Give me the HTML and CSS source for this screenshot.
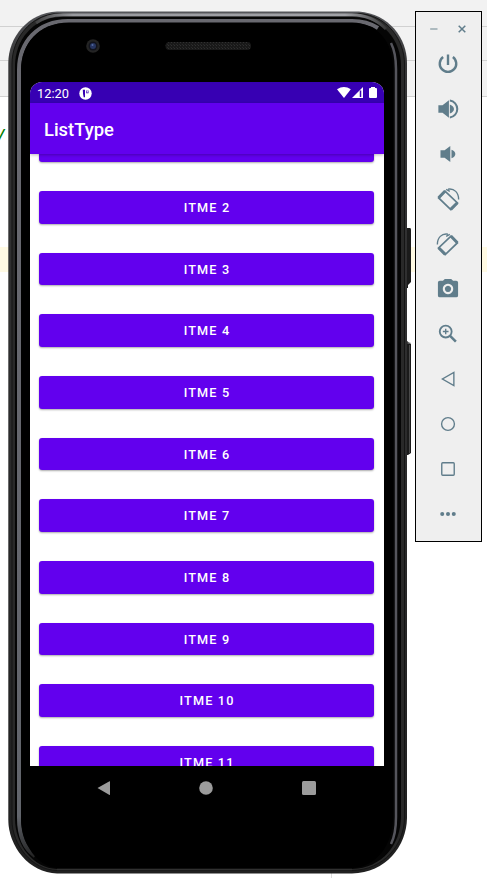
FILE: index.html
```
<!DOCTYPE html>
<html lang="en">
<head>
<meta charset="utf-8">
<title>ListType</title>
<link rel="stylesheet" href="styles.css">
</head>
<body>
<div class="editor">
  <div class="strip strip-a"></div><div class="strip strip-b"></div><div class="strip strip-c"></div>
  <div class="code">/</div>
  <div class="caret-row"></div>
  <div class="guide"></div>
</div>
<main class="desktop">
  <section class="phone">
    <svg class="frame" width="407" height="866" viewBox="8 10 407 866">
      <defs>
        <linearGradient id="rim" x1="0" y1="0" x2="0" y2="1">
          <stop offset="0" stop-color="#55565a"/><stop offset=".06" stop-color="#353536"/><stop offset="1" stop-color="#202020"/>
        </linearGradient>
        <linearGradient id="shine" gradientUnits="userSpaceOnUse" x1="0" y1="20" x2="0" y2="858">
          <stop offset="0" stop-color="#696970"/><stop offset=".95" stop-color="#62656c"/><stop offset="1" stop-color="#222"/>
        </linearGradient>
        <linearGradient id="top" gradientUnits="userSpaceOnUse" x1="30" y1="0" x2="388" y2="0">
          <stop offset="0" stop-color="#333"/><stop offset=".12" stop-color="#999a9f"/><stop offset=".88" stop-color="#a2a3a8"/><stop offset="1" stop-color="#333"/>
        </linearGradient>
        <pattern id="mesh" width="3" height="3" patternUnits="userSpaceOnUse"><rect width="3" height="3" fill="#191919"/><rect width="1" height="1" fill="#303030"/><rect x="2" y="2" width="1" height="1" fill="#282828"/></pattern>
      </defs>
      <path d="M406 228h4q1 0 1 2v52l-3 3v3h-2z" fill="#1b1b1b"/>
      <path d="M406 341h1l4 3v109l-3 2h-2z" fill="#1b1b1b"/><path d="M409.500 345v108" stroke="#4a4a4a"/><path d="M407.500 343h3" stroke="#999"/>
      <path d="M57 11.500H359C389 14 407 38 407 63V818C406.500 846 386 873 352 873.500H57C29 873 8.300 846 8.300 820V63C8.300 37 28 13 57 11.500Z" fill="url(#rim)"/>
      <path d="M57 13.500H359C387 15 404.500 40 404.500 64V818C404 845 384 870 352 870.500H57C32 870 12 845 12 820V64C12 38 31 15 57 13.500Z" fill="#292929" stroke="#141414"/>
      <path d="M60 17H354C384 18 401 41 401 66V816C401 845 382 868 352 869H57C33 868 15 845 15 818V66C15 40 33 18 60 17Z" fill="#050505"/>
      <path d="M36 23Q47 15 63 14.800H352Q372 15 386 29" fill="none" stroke="url(#top)" stroke-width="3"/>
      <path d="M57 869.500H352" stroke="#303030" stroke-width="1.500"/>
      <path d="M378 28Q367 21 352 21H68C38 21 19 42 19 70V818Q19 845 35 856" fill="none" stroke="url(#shine)" stroke-width="4"/>
      <path d="M391 43Q396 53 396 69V817Q396 834 391 844" fill="none" stroke="#55555c" stroke-width="2.500"/>
      <path d="M352 22.500H69C39 23 21 43 21 71V818C21 844 38 867 57 868H352C377 867 393 844 393 817V69C393 42 378 23 352 22.500Z" fill="#000"/>
      <circle cx="93" cy="46" r="6.800" fill="#242424"/><circle cx="93" cy="46" r="4.500" fill="#11131c"/><circle cx="93" cy="46" r="3" fill="#26345f"/><circle cx="92.500" cy="45" r="1" fill="#5269a0"/>
      <rect x="165.500" y="42" width="85.500" height="8" rx="4" fill="url(#mesh)"/>
    </svg>
    <div class="screen">
      <div class="status">
        <span>12:20</span>
        <svg class="badge" width="13" height="13" viewBox="0 0 13 13"><circle cx="6.500" cy="6.500" r="6.200" fill="#fff"/><path d="M3.800 2.800H6v7.400H4.700Q3.800 7 3.800 2.800ZM7.200 3.600h2.300v2.600H7.200z" fill="#3700b3"/><path d="M7.800 3.600h1v1.800h-1z" fill="#fff"/></svg>
        <svg class="signals" width="42" height="12" viewBox="337 87 42 12"><path d="M337 89.300Q344 84.700 350.800 89.300L344 98Z" fill="#fff"/><path d="M352 98L363 87V98Z" fill="#fff"/><path d="M360.500 90.500V97" stroke="#3700b3" stroke-width="1.500"/><path d="M371 87h4v1h1q1 0 1 1v8q0 1-1 1h-6q-1 0-1-1v-8q0-1 1-1h1z" fill="#fff"/></svg>
      </div>
      <header class="appbar">ListType</header>
      <div class="list">
        <div class="button">ITME 1</div><div class="button">ITME 2</div><div class="button">ITME 3</div><div class="button">ITME 4</div><div class="button">ITME 5</div><div class="button">ITME 6</div><div class="button">ITME 7</div><div class="button">ITME 8</div><div class="button">ITME 9</div><div class="button">ITME 10</div><div class="button">ITME 11</div>
      </div>
    </div>
    <nav class="nav">
      <svg width="16" height="16" viewBox="0 0 16 16"><path d="M1.500 8L13.500 1.200q.5-.2.500.4v13q0 .600-.5.300Z"/></svg>
      <svg width="16" height="16" viewBox="0 0 16 16"><circle cx="8" cy="8" r="6.800"/></svg>
      <svg width="16" height="16" viewBox="0 0 16 16"><rect x="1" y="1" width="14" height="14" rx="1.500"/></svg>
    </nav>
  </section>
  <aside class="tools">
    <div class="window">
      <svg width="8" height="10" viewBox="0 0 8 10"><path d="M.2 5h7.300" stroke="#a1b0b6" stroke-width="1.700"/></svg>
      <svg width="8" height="10" viewBox="0 0 8 10"><path d="M.7 1.700l6.600 6.600m0-6.600L.7 8.300" stroke="#607d8b" stroke-width="1.500"/></svg>
    </div>
    <svg class="tool" viewBox="0 0 24 24"><path class="line" stroke-width="2.600" d="M12 1.500v11.500M6.700 4.300a9 9 0 1 0 10.600 0"/></svg>
    <svg class="tool" viewBox="0 0 24 24"><path d="M1.500 8h4.500L13 2.500v19L6 16h-4.500zM14 7q4.500 1.800 4.500 5t-4.500 5z"/><path class="line" stroke-width="2.200" d="M14 2.600a9.500 9.500 0 0 1 0 18.800"/></svg>
    <svg class="tool" viewBox="0 0 24 24"><path d="M3.800 8h4.500L14.500 3.200v17.600L8.300 16h-4.500zM15.800 7.300q4.200 1.700 4.200 4.700t-4.200 4.700z"/></svg>
    <svg class="tool" viewBox="0 0 24 24"><path class="line" stroke-width="1.900" d="M1.800 10.800L8.800 3.500L22.300 16.300L15 23.500Z"/><path class="line" stroke-width="3.300" d="M1.800 10.600L8.900 3.300M15 23.300l7.200-7.200"/><path class="line" stroke-width="1.500" d="M10 1.500l4 2.200M12 1.300C19 .2 23.600 5 23.600 12.500"/></svg>
    <svg class="tool" viewBox="0 0 24 24"><path class="line" stroke-width="1.900" d="M22.200 10.800L15.200 3.500L1.700 16.300L9 23.500Z"/><path class="line" stroke-width="3.300" d="M22.200 10.600L15.100 3.300M9 23.300l-7.200-7.200"/><path class="line" stroke-width="1.500" d="M14 1.500l-4 2.200M12 1.300C5 .2 .4 5 .4 12.500"/></svg>
    <svg class="tool" viewBox="0 0 24 24"><path fill-rule="evenodd" d="M8.500 1h7l2 2H21q2 0 2 2v14q0 2-2 2H3q-2 0-2-2V5q0-2 2-2h3.500zM12 6.200a5.700 5.700 0 1 0 .01 0zM12 8.500a3.400 3.400 0 1 1-.01 0z"/></svg>
    <svg class="tool" viewBox="0 0 24 24"><circle class="line" stroke-width="2" cx="9.500" cy="9.300" r="6.500"/><path class="line" stroke-width="2.800" d="M14 13.800l6.600 6.600"/><path class="line" stroke-width="1.500" d="M6.400 9.300h6.200M9.500 6.200v6.200"/></svg>
    <svg class="tool" viewBox="0 0 24 24"><path class="line" stroke-width="1.500" d="M18.400 4.800v14.400L5.900 12z"/></svg>
    <svg class="tool" viewBox="0 0 24 24"><circle class="line" stroke-width="1.500" cx="12" cy="12" r="7"/></svg>
    <svg class="tool" viewBox="0 0 24 24"><rect class="line" stroke-width="1.500" x="5.200" y="5.200" width="13.600" height="13.600" rx="1"/></svg>
    <svg class="tool" viewBox="0 0 24 24"><circle cx="5.700" cy="12" r="2.200"/><circle cx="12" cy="12" r="2.200"/><circle cx="18.300" cy="12" r="2.200"/></svg>
  </aside>
</main>
</body>
</html>
```
FILE: styles.css
```
* { box-sizing: border-box; }
body { margin: 0; width: 487px; height: 878px; overflow: hidden; background: #fff; font-family: Roboto, sans-serif; }
svg { display: block; flex: none; }
.editor { position: absolute; inset: 0; }
.strip { background: #f2f2f2; border-bottom: 1px solid #d1d1d1; }
.strip-a { height: 27px; }
.strip-b { height: 34px; }
.strip-c { height: 36px; }
.code { height: 150px; padding-top: 25px; margin-left: -4px; color: #008000; font: italic 18px/28px "DejaVu Sans Mono", monospace; }
.caret-row { height: 25px; background: #fffae3; }
.guide { width: 1px; height: 606px; margin-left: 331px; background: #ddd; }
.desktop { position: relative; display: flex; align-items: flex-start; height: 878px; padding-left: 8px; }
.phone { position: relative; width: 407px; height: 878px; padding: 82px 31px 0 22px; }
.frame { position: absolute; left: 0; top: 10px; }
.screen { position: relative; width: 354px; height: 684px; overflow: hidden; border-radius: 12px 12px 0 0; background: #fff; }
.status { display: flex; align-items: center; height: 21px; padding: 1px 5px 0 7px; background: #3700b3; color: #fff; font-size: 12.800px; }
.badge { margin-left: 10px; }
.signals { margin-left: auto; }
.appbar { position: relative; z-index: 1; height: 50.500px; padding-left: 14px; background: #6200ee; box-shadow: 0 1px 3px #0004; color: #fff; font-size: 18.400px; font-weight: 500; line-height: 54px; }
.list { display: flex; flex-direction: column; gap: 29.070px; margin-top: -24px; padding: 0 10px 0 9px; }
.button { flex: none; height: 32.600px; padding-left: 1px; border-radius: 3px; background: #6200ee; box-shadow: 0 1px 2px #0005; color: #fff; font-size: 12.700px; font-weight: 500; letter-spacing: 1.150px; line-height: 34px; text-align: center; }
.nav { position: relative; display: flex; justify-content: space-between; margin: 14px 67.500px 0 66px; fill: #9b9b9b; }
.tools { width: 67px; height: 531px; margin-top: 11px; border: 1px solid #000; background: #efefef; }
.window { display: flex; justify-content: space-between; height: 29px; padding: 12px 15px 0 14px; }
.tool { width: 22px; height: 22px; margin: 12px auto 23px 21px; overflow: visible; fill: #607d8b; }
.tool + .tool { margin-top: 0; }
.line { fill: none; stroke: #607d8b; }
```
